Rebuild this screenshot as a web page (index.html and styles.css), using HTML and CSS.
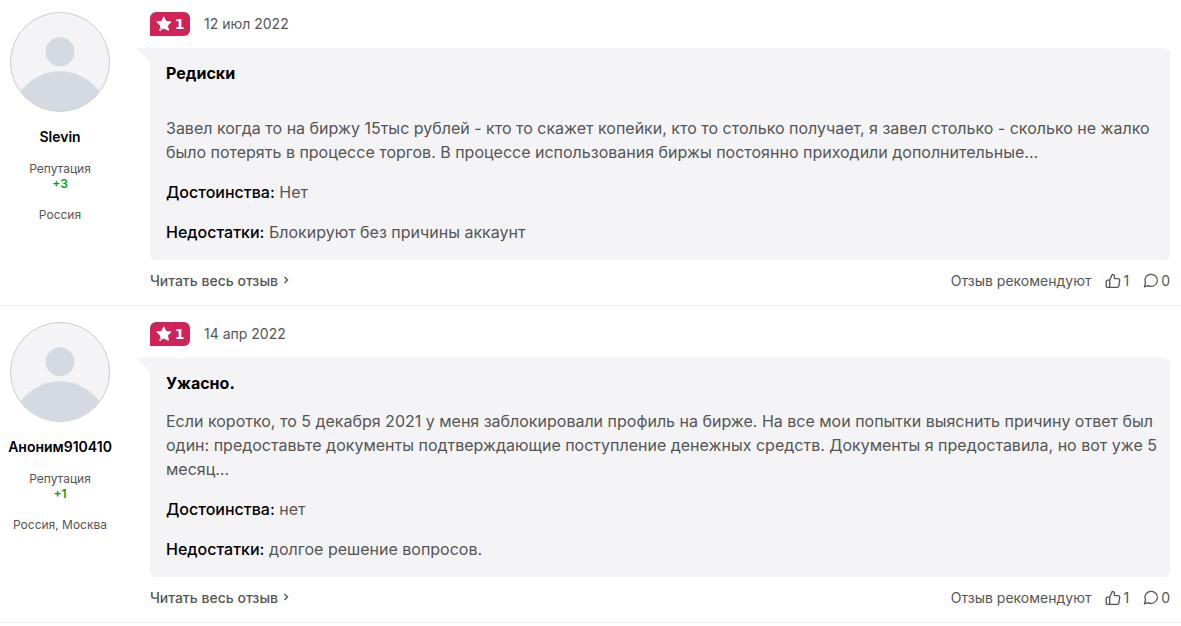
FILE: index.html
```html
<!DOCTYPE html>
<html lang="ru">
<head>
<meta charset="utf-8">
<title>Отзывы</title>
<meta name="viewport" content="width=device-width, initial-scale=1.0">
<link rel="stylesheet" href="styles.css">
</head>
<body>

<!-- общие иконки -->
<svg class="sprite" aria-hidden="true">
  <symbol id="avatar" viewBox="0 0 100 100">
    <circle cx="50" cy="39.500" r="14.800" fill="#d4d9e2"/>
    <circle cx="50" cy="109" r="49.500" fill="#d4d9e2"/>
  </symbol>
  <symbol id="star" viewBox="0 0 16 16">
    <path d="M7.800 1.300 9.700 5.300 14.600 6 11.200 9.300 12.300 14 8 11.800 6 12.900 5 12.200 4.700 9.300 1.200 6 5.900 5.300Z" fill="#fff" stroke="#fff" stroke-width="1.300" stroke-linejoin="round"/>
    <circle cx="4.200" cy="14" r="1" fill="#fff"/>
  </symbol>
  <symbol id="like" viewBox="0 0 16 16">
    <path d="M4.700 7.200 7.300 1.300C8.500 1.300 9.400 2.200 9.400 3.400V5.600H13.200C14.200 5.600 14.800 6.400 14.700 7.300L13.900 12.900C13.800 13.800 13.200 14.400 12.300 14.400H2.500C1.700 14.400 1.200 13.800 1.200 13.100V8.500C1.200 7.700 1.700 7.200 2.500 7.200H4.700V14.400" fill="none" stroke="currentColor" stroke-width="1.300" stroke-linejoin="round"/>
  </symbol>
  <symbol id="comment" viewBox="0 0 16 16">
    <path d="M1.400 13.800 2.500 10A6.300 6 0 1 1 5.100 12.600Z" fill="none" stroke="currentColor" stroke-width="1.300" stroke-linejoin="round"/>
  </symbol>
  <symbol id="arrow" viewBox="0 0 8 8">
    <path d="M2.500 1 5.500 4 2.500 7" fill="none" stroke="currentColor" stroke-width="1.400"/>
  </symbol>
</svg>

<div class="reviews">

  <article class="review">
    <aside class="author">
      <svg class="avatar" aria-hidden="true"><use href="#avatar"/></svg>
      <a href="#" class="name">Slevin</a>
      <div class="karma">Репутация<br><b>+3</b></div>
      <div class="place">Россия</div>
    </aside>
    <div class="content">
      <header class="head">
        <span class="rating"><svg aria-hidden="true"><use href="#star"/></svg>1</span>
        <time datetime="2022-07-12">12 июл 2022</time>
      </header>
      <div class="bubble">
        <h3 class="title spaced"><a href="#">Редиски</a></h3>
        <p>Завел когда то на биржу 15тыс рублей - кто то скажет копейки, кто то столько получает, я завел столько - сколько не жалко было потерять в процессе торгов. В процессе использования биржы постоянно приходили дополнительные...</p>
        <p><b>Достоинства:</b> Нет</p>
        <p><b>Недостатки:</b> Блокируют без причины аккаунт</p>
      </div>
      <footer class="foot">
        <a href="#" class="more">Читать весь отзыв <svg aria-hidden="true"><use href="#arrow"/></svg></a>
        <div class="actions">
          <span>Отзыв рекомендуют</span>
          <button type="button" aria-label="Рекомендую"><svg aria-hidden="true"><use href="#like"/></svg>1</button>
          <button type="button" aria-label="Комментарии"><svg aria-hidden="true"><use href="#comment"/></svg>0</button>
        </div>
      </footer>
    </div>
  </article>

  <article class="review">
    <aside class="author">
      <svg class="avatar" aria-hidden="true"><use href="#avatar"/></svg>
      <a href="#" class="name">Аноним910410</a>
      <div class="karma">Репутация<br><b>+1</b></div>
      <div class="place">Россия, Москва</div>
    </aside>
    <div class="content">
      <header class="head">
        <span class="rating"><svg aria-hidden="true"><use href="#star"/></svg>1</span>
        <time datetime="2022-04-14">14 апр 2022</time>
      </header>
      <div class="bubble">
        <h3 class="title"><a href="#">Ужасно.</a></h3>
        <p>Если коротко, то 5 декабря 2021 у меня заблокировали профиль на бирже. На все мои попытки выяснить причину ответ был один: предоставьте документы подтверждающие поступление денежных средств. Документы я предоставила, но вот уже 5 месяц...</p>
        <p><b>Достоинства:</b> нет</p>
        <p><b>Недостатки:</b> долгое решение вопросов.</p>
      </div>
      <footer class="foot">
        <a href="#" class="more">Читать весь отзыв <svg aria-hidden="true"><use href="#arrow"/></svg></a>
        <div class="actions">
          <span>Отзыв рекомендуют</span>
          <button type="button" aria-label="Рекомендую"><svg aria-hidden="true"><use href="#like"/></svg>1</button>
          <button type="button" aria-label="Комментарии"><svg aria-hidden="true"><use href="#comment"/></svg>0</button>
        </div>
      </footer>
    </div>
  </article>

</div>
</body>
</html>
```

FILE: styles.css
```css
*,*::before,*::after {box-sizing: border-box;}
body {
  margin: 0;
  background: #fff;
  color: #555;
  font-family: Inter, "Noto Sans", sans-serif;
  font-size: 16px;
  line-height: 24px;
}
a {color: inherit; text-decoration: none;}
p {margin: 0;}
.sprite {position: absolute; width: 0; height: 0;}

.review {
  display: flex;
  gap: 30px;
  padding: 16px 11px 0 0;
  border-bottom: 1px solid #f0f0f2;
}
.review:first-child {padding-top: 12px;}

/* автор */
.author {
  display: flex;
  flex-direction: column;
  align-items: center;
  flex: 0 0 120px;
  font-size: 12px;
  line-height: 15px;
  text-align: center;
}
.avatar {
  width: 100px;
  height: 100px;
  border: 1px solid #ccc;
  border-radius: 50%;
  background: #f4f4f7;
}
.name {
  margin-top: 15px;
  color: #000;
  font-size: 14px;
  font-weight: 600;
  line-height: 20px;
  white-space: nowrap;
}
.karma {margin-top: 14px;}
.karma b {color: #0a9f0a; font-weight: 600;}
.place {margin-top: 16px;}

/* отзыв */
.content {flex: 1; min-width: 0;}
.head {
  display: flex;
  align-items: center;
  gap: 14px;
  margin-bottom: 12px;
  font-size: 14px;
}
.rating {
  display: flex;
  align-items: center;
  justify-content: center;
  gap: 3px;
  width: 40px;
  height: 24px;
  border-radius: 6px 6px 6px 0;
  background: #d02357;
  color: #fff;
  font-family: "DejaVu Sans", sans-serif;
  font-weight: 700;
}
.rating svg {width: 16px; height: 16px;}
.bubble {
  position: relative;
  padding: 13px 10px 16px 16px;
  border-radius: 0 6px 6px 6px;
  background: #f4f4f7;
}
.bubble::before {
  content: "";
  position: absolute;
  top: 0;
  right: 100%;
  border-top: 14px solid #f4f4f7;
  border-left: 14px solid transparent;
}
.bubble p + p {margin-top: 16px;}
.bubble b {color: #000; font-weight: 500;}
.title {
  margin: 0 0 14px;
  color: #000;
  font-size: 16px;
  font-weight: 700;
}
.title.spaced {margin-bottom: 31px;}

.foot {
  display: flex;
  align-items: center;
  justify-content: space-between;
  height: 45px;
  padding-bottom: 3px;
  font-size: 14px;
}
.more {font-weight: 500;}
.more svg {width: 8px; height: 8px; vertical-align: 2px;}
.actions {display: flex; align-items: center; gap: 14px;}
.actions button {
  display: flex;
  align-items: center;
  gap: 2px;
  padding: 0;
  border: 0;
  background: none;
  color: inherit;
  font: inherit;
  cursor: pointer;
}
.actions svg {width: 16px; height: 16px;}
```
